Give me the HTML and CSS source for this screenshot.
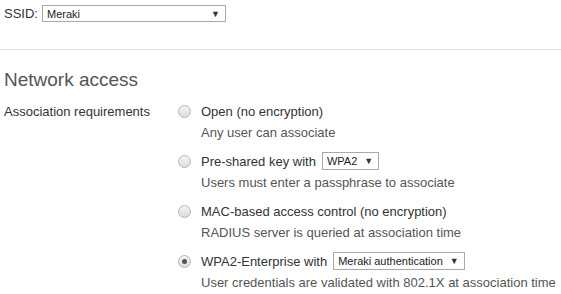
FILE: index.html
```html
<!DOCTYPE html>
<html>
<head>
    <title>Access control</title>
    <link rel="stylesheet" href="styles.css">
</head>
<body>
    <div class="ssid-row">
        <span class="ssid-label">SSID:</span>
        <span class="fake-select ssid-select"><span>Meraki</span><span class="arrow">&#9660;</span></span>
    </div>

    <hr class="divider">

    <h2 class="section-title">Network access</h2>

    <div class="field">
        <div class="field-label">Association requirements</div>
        <div class="options">
            <div class="option">
                <div class="option-line"><span class="radio"></span><span>Open (no encryption)</span></div>
                <div class="option-desc">Any user can associate</div>
            </div>
            <div class="option">
                <div class="option-line"><span class="radio"></span><span>Pre-shared key with</span>
                    <span class="fake-select small-select"><span>WPA2</span><span class="arrow">&#9660;</span></span>
                </div>
                <div class="option-desc">Users must enter a passphrase to associate</div>
            </div>
            <div class="option">
                <div class="option-line"><span class="radio"></span><span>MAC-based access control (no encryption)</span></div>
                <div class="option-desc">RADIUS server is queried at association time</div>
            </div>
            <div class="option">
                <div class="option-line"><span class="radio checked"></span><span>WPA2-Enterprise with</span>
                    <span class="fake-select small-select"><span>Meraki authentication</span><span class="arrow">&#9660;</span></span>
                </div>
                <div class="option-desc">User credentials are validated with 802.1X at association time</div>
            </div>
        </div>
    </div>
</body>
</html>
```

FILE: styles.css
```css
body { margin: 0; padding: 0 0 0 4px; font-family: "Liberation Sans", Arial, sans-serif; font-size: 13px; color: #333; background: #fff; }
.ssid-row { display: flex; align-items: center; gap: 4px; padding-top: 5px; height: 17px; }
.fake-select { display: inline-flex; align-items: center; justify-content: space-between; box-sizing: border-box; border: 1px solid #a9a9a9; background: #fff; font-size: 11px; color: #222; padding: 0 5px 0 4px; }
.ssid-select { width: 184px; height: 17px; }
.small-select { height: 18px; gap: 7px; margin-left: 6px; }
.arrow { font-size: 9px; color: #333; }
.divider { border: none; border-top: 1px solid #e5e5e5; margin: 27px 0 0 -4px; }
.section-title { font-size: 19px; font-weight: normal; color: #555; margin: 19px 0 0 0; line-height: 22px; }
.field { display: flex; margin-top: 11px; }
.field-label { width: 174px; line-height: 17px; padding-top: 1px; }
.options { display: flex; flex-direction: column; }
.option { height: 50px; }
.option-line { display: flex; align-items: center; height: 18px; }
.radio { width: 11px; height: 11px; border: 1px solid #b5b5b5; border-radius: 50%; background: linear-gradient(#f4f4f4, #dcdcdc); margin-right: 10px; position: relative; }
.radio.checked::after { content: ""; position: absolute; left: 3px; top: 3px; width: 5px; height: 5px; border-radius: 50%; background: #555; }
.option-desc { margin-left: 23px; margin-top: 5px; color: #555; line-height: 16px; }
```
